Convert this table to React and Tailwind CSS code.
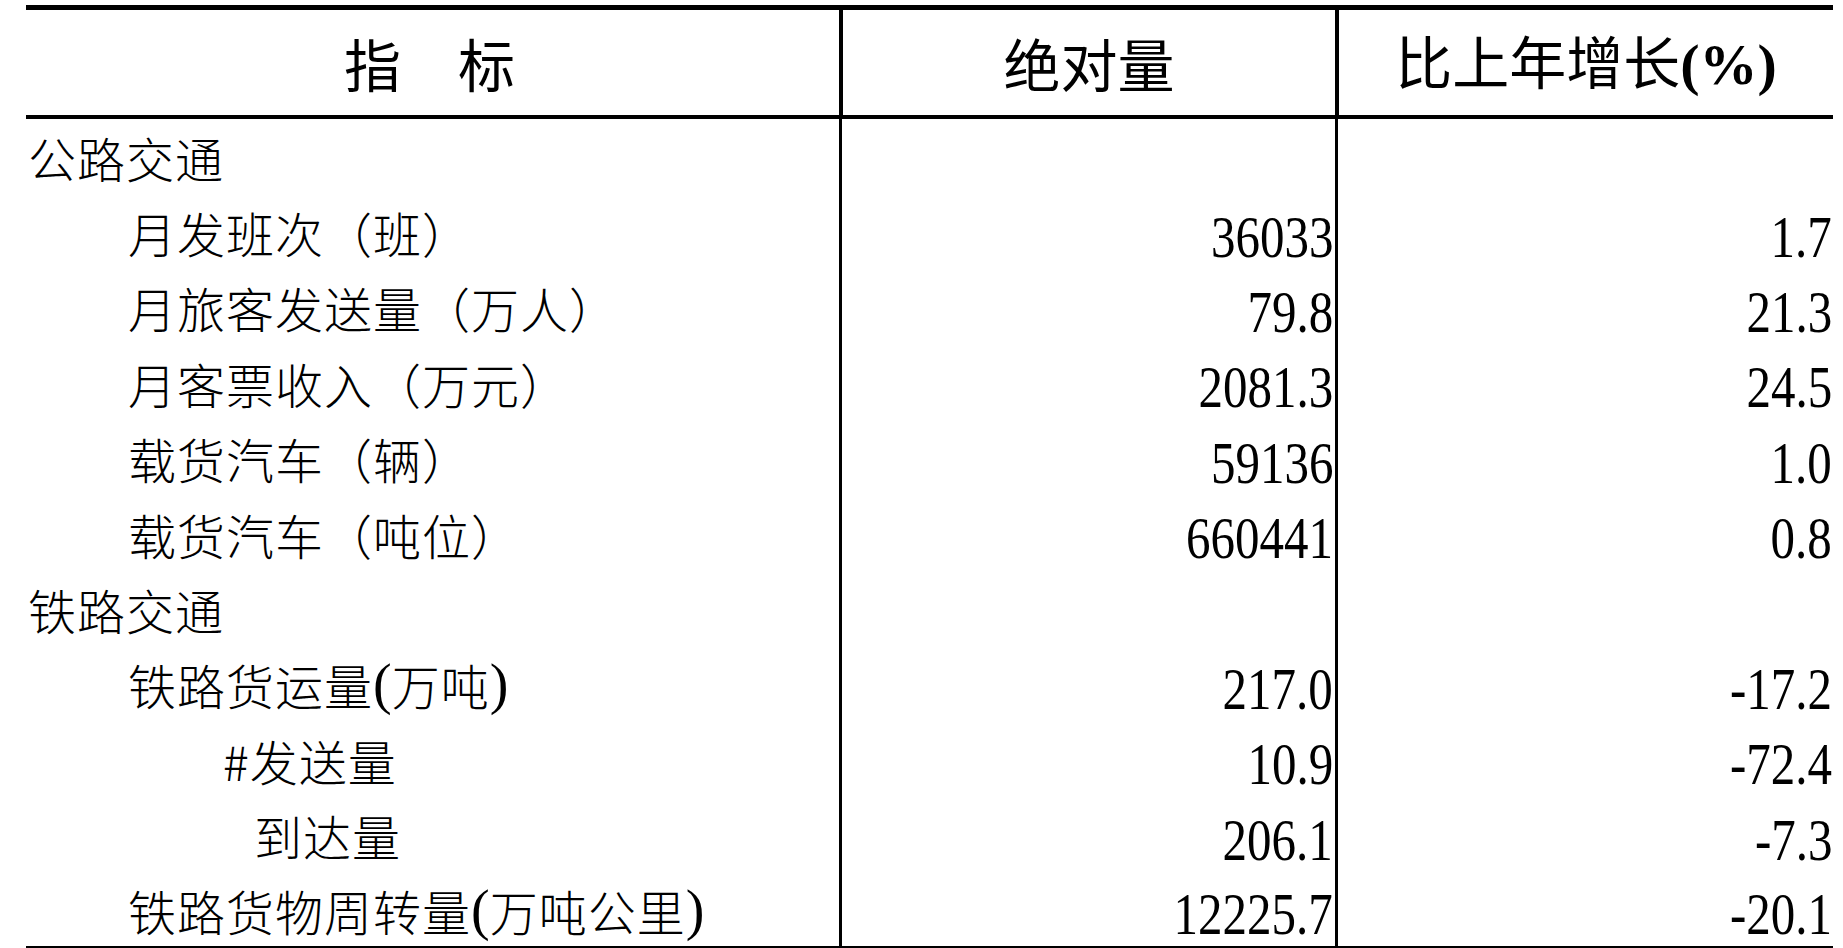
import React from "react";

const P = ({ children }) => (
  <span className="font-['Liberation_Serif',serif] text-[56px] font-normal tracking-normal">{children}</span>
);

const rows = [
  { label: "公路交通", level: 0 },
  { label: "月发班次（班）", level: 1, a: "36033", b: "1.7" },
  { label: "月旅客发送量（万人）", level: 1, a: "79.8", b: "21.3" },
  { label: "月客票收入（万元）", level: 1, a: "2081.3", b: "24.5" },
  { label: "载货汽车（辆）", level: 1, a: "59136", b: "1.0" },
  { label: "载货汽车（吨位）", level: 1, a: "660441", b: "0.8" },
  { label: "铁路交通", level: 0 },
  {
    label: (
      <>
        铁路货运量<P>(</P>万吨<P>)</P>
      </>
    ),
    level: 1,
    a: "217.0",
    b: "-17.2",
  },
  { label: "#发送量", level: 2, a: "10.9", b: "-72.4" },
  { label: "到达量", level: 3, a: "206.1", b: "-7.3" },
  {
    label: (
      <>
        铁路货物周转量<P>(</P>万吨公里<P>)</P>
      </>
    ),
    level: 1,
    a: "12225.7",
    b: "-20.1",
  },
];

const levelPad = ["pl-[2px]", "pl-[102px]", "pl-[197px]", "pl-[228px]"];

const Num = ({ v }) => (
  <span className="inline-block origin-right scale-x-83 font-['Liberation_Serif',serif] text-[59px] font-normal leading-none text-black">
    {v}
  </span>
);

export default function App() {
  return (
    <div className="w-[1843px] h-[948px] overflow-hidden bg-white pt-[5px] pl-[26px] text-black">
      <div className="w-[1807px]">
        <div className="grid grid-cols-[813px_496px_498px] h-[114px] border-t-[5px] border-b-[4px] border-black font-['Noto_Sans_CJK_SC',sans-serif] text-[57px] leading-none font-normal">
          <div className="flex items-center justify-center pr-[6px]">指　标</div>
          <div className="flex items-center justify-center border-l-[4px] border-black">绝对量</div>
          <div className="flex items-center justify-center border-l-[4px] border-black">
            <span>
              比上年增长
              <span className="font-['Liberation_Serif',serif] font-bold text-[58px]">(%)</span>
            </span>
          </div>
        </div>
        {rows.map((r, i) => (
          <div
            key={i}
            className={
              "grid grid-cols-[813px_496px_498px] h-[75.4px] " +
              (i === rows.length - 1 ? "border-b-2 border-black" : "")
            }
          >
            <div
              className={
                "flex items-center whitespace-nowrap font-['Noto_Sans_CJK_SC',sans-serif] text-[48px] leading-none font-light tracking-[1px] " +
                levelPad[r.level]
              }
            >
              {r.label}
            </div>
            <div className="flex items-center justify-end border-l-[3px] border-black pt-[10px] pr-[2px]">
              {r.a && <Num v={r.a} />}
            </div>
            <div className="flex items-center justify-end border-l-[3px] border-black pt-[10px] pr-[1px]">
              {r.b && <Num v={r.b} />}
            </div>
          </div>
        ))}
      </div>
    </div>
  );
}
